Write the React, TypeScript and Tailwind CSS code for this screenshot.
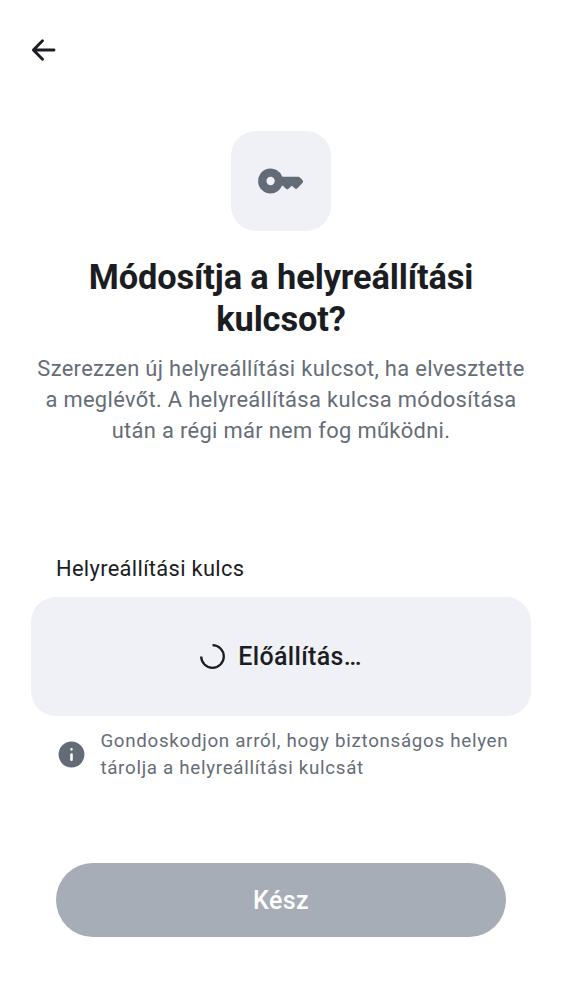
export default function App() {
  return (
    <main className="flex h-[1000px] w-[562px] flex-col bg-white font-['Roboto',sans-serif] text-[#1b1d22]">
      <header className="flex h-[100px] items-center pl-[28px]">
        <button aria-label="Vissza" className="text-[#1b1d22]">
          <svg width="31" height="31" viewBox="0 0 31 31" fill="none" stroke="currentColor" strokeWidth="2.9" strokeLinecap="round" strokeLinejoin="round">
            <path d="M26 15H6M14.5 5.8 5.4 15l9.1 9.2" />
          </svg>
        </button>
      </header>
      <section className="flex flex-col items-center pt-[31px] text-center">
        <div className="flex size-[100px] items-center justify-center rounded-[25px] bg-[#f0f1f6]">
          <svg width="50" height="50" viewBox="0 0 24 24" fill="#626b76">
            <path fillRule="evenodd" d="M7 14a2 2 0 1 0 0-4 2 2 0 0 0 0 4m0 4a6 6 0 1 1 5.65-8h7.73q.4 0 .7.3l1.2 1.2q.3.3.3.7 0 .4-.3.7l-2.4 2.55q-.28.28-.65.3-.37.02-.68-.24L17.2 14.3l-1.6 1.4a.9.9 0 0 1-1.2 0L12.9 14.3h-.45A6 6 0 0 1 7 18" />
          </svg>
        </div>
        <h1 className="mt-[25px] text-[34.375px] leading-[42.2px] font-bold tracking-[-0.11px]">Módosítja a helyreállítási<br />kulcsot?</h1>
        <p className="mt-[12.6px] text-[21.875px] leading-[31px] tracking-[0.34px] text-[#656d77]">Szerezzen új helyreállítási kulcsot, ha elvesztette<br />a meglévőt. A helyreállítása kulcsa módosítása<br />után a régi már nem fog működni.</p>
      </section>
      <section className="mt-[107px] px-[31px]">
        <h2 className="pl-[25px] text-[21.875px] leading-[31px] tracking-[0.33px]">Helyreállítási kulcs</h2>
        <div className="mt-[13px] flex h-[118.5px] items-center justify-center gap-[13px] rounded-[25px] bg-[#f0f1f6] text-[25px] font-medium tracking-[0.32px]">
          <svg width="25" height="25" viewBox="0 0 25 25" fill="none" stroke="#1b1d22" strokeWidth="2.3">
            <path d="M12.5 1.2A11.3 11.3 0 1 1 1.2 12.5" />
          </svg>
          <span>Előállítás…</span>
        </div>
        <div className="mt-[12px] flex items-center gap-[13px] pl-[25.4px]">
          <svg width="31" height="31" viewBox="0 0 24 24" fill="#626b76" className="shrink-0">
            <path fillRule="evenodd" d="M12 2a10 10 0 1 0 0 20 10 10 0 0 0 0-20m0 5a1 1 0 1 1 0 2 1 1 0 0 1 0-2m-1 5a1 1 0 1 1 2 0v4a1 1 0 1 1-2 0z" />
          </svg>
          <p className="text-[18.75px] leading-[27px] tracking-[0.7px] text-[#656d77]">Gondoskodjon arról, hogy biztonságos helyen<br />tárolja a helyreállítási kulcsát</p>
        </div>
      </section>
      <button className="mx-[56px] mt-auto mb-[63px] h-[74.5px] rounded-full bg-[#a6adb7] pt-[1px] text-[25px] font-medium tracking-[0.4px] text-white" disabled>Kész</button>
    </main>
  );
}
